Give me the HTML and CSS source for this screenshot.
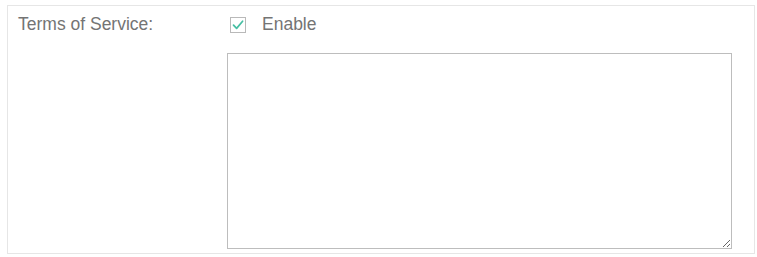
FILE: index.html
```html
<!DOCTYPE html>
<html>
<head>
<meta charset="utf-8">
<link rel="stylesheet" href="styles.css">
</head>
<body>
<div class="panel">
  <div class="label">Terms of Service:</div>
  <label class="option">
    <span class="check">
      <svg width="16" height="16" viewBox="0 0 16 16"><path d="M3.5 8.2 L6.6 11.4 L12.6 4.2" fill="none" stroke="#46bfa3" stroke-width="1.7" stroke-linecap="round" stroke-linejoin="round"/></svg>
    </span>
    <span class="option-text">Enable</span>
  </label>
  <div class="spacer"></div>
  <textarea class="terms"></textarea>
</div>
</body>
</html>
```

FILE: styles.css
```css
html, body {
  margin: 0;
  padding: 0;
  background: #ffffff;
}
body {
  font-family: "Liberation Sans", Arial, sans-serif;
  color: #747474;
}
.panel {
  margin: 5px 0 0 7px;
  width: 748px;
  height: 249px;
  box-sizing: border-box;
  border: 1px solid #e6e6e6;
  padding: 8px 0 0 10px;
  display: grid;
  grid-template-columns: 209px 505px;
  grid-template-rows: 20px 196px;
  row-gap: 19px;
}
.label {
  font-size: 17.5px;
  line-height: 20px;
}
.option {
  display: flex;
  align-items: flex-start;
  font-size: 17.5px;
  line-height: 20px;
}
.check {
  display: block;
  width: 16px;
  height: 16px;
  box-sizing: border-box;
  border: 1px solid #b9b9b9;
  margin: 3px 0 0 3px;
  background: #fff;
}
.check svg {
  display: block;
  margin: -1px 0 0 -1px;
}
.option-text {
  margin-left: 16px;
}
.terms {
  width: 505px;
  height: 196px;
  box-sizing: border-box;
  border: 1px solid #bdbdbd;
  margin: 0;
  padding: 4px;
  resize: both;
  outline: none;
  background: #fff;
}
```
